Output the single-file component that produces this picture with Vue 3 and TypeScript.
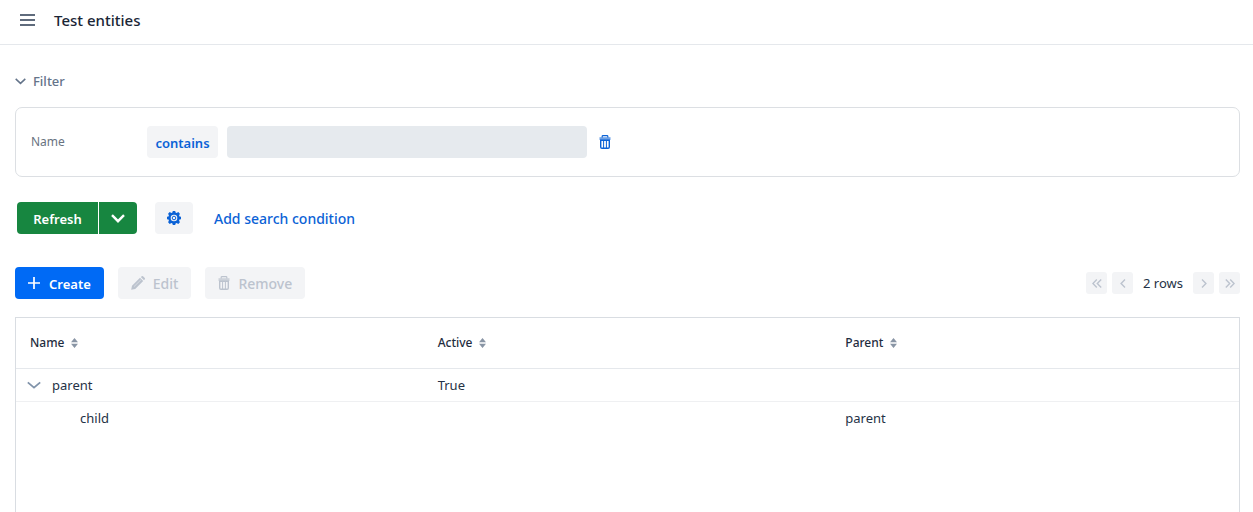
<script setup lang="ts">
import { computed, ref } from 'vue'

interface Entity {
  id: number
  name: string
  active: string
  parent: string
  level: number
  hasChildren: boolean
}

const columns: string[] = ['Name', 'Active', 'Parent']
const entities: Entity[] = [
  { id: 1, name: 'parent', active: 'True', parent: '', level: 0, hasChildren: true },
  { id: 2, name: 'child', active: '', parent: 'parent', level: 1, hasChildren: false },
]

const nameFilter = ref('')
const filterOpen = ref(true)
const expanded = ref(true)
const visibleRows = computed(() => entities.filter((e) => e.level === 0 || expanded.value))
</script>

<template>
  <div class="view">
    <header class="navbar">
      <button class="plain menu" type="button" aria-label="Toggle menu">
        <svg width="15" height="12" viewBox="0 0 15 12"><path d="M0 1h15M0 6h15M0 11h15" stroke="currentColor" stroke-width="1.8" /></svg>
      </button>
      <h1>Test entities</h1>
    </header>

    <main class="content">
      <button class="plain summary" type="button" :aria-expanded="filterOpen" @click="filterOpen = !filterOpen">
        <svg width="11" height="7" viewBox="0 0 11 7"><path d="M.7.9 5.5 5.4 10.3.9" fill="none" stroke="currentColor" stroke-width="1.5" /></svg>
        <span>Filter</span>
      </button>

      <section v-show="filterOpen" class="conditions">
        <label for="name-filter">Name</label>
        <button class="btn soft operation" type="button"><span>contains</span></button>
        <input id="name-filter" v-model="nameFilter" type="text" />
        <button class="plain trash" type="button" aria-label="Remove condition">
          <svg width="12" height="14" viewBox="0 0 12 14"><path d="M3.2 2.4V1.3Q3.2.6 4 .6h4q.8 0 .8.7v1.1" fill="none" stroke="currentColor" stroke-width="1.2" /><path d="M.5 2.2h11v2.8H.5z" fill="currentColor" opacity=".6" /><path d="M1.7 5.3h8.6v6.8q0 1.2-1.2 1.2H2.9q-1.2 0-1.2-1.2z" fill="none" stroke="currentColor" stroke-width="1.4" /><path d="M4.6 5v8M7.4 5v8" stroke="currentColor" stroke-width="1" /></svg>
        </button>
      </section>

      <div class="search">
        <div class="split">
          <button class="btn success" type="button"><span>Refresh</span></button>
          <button class="btn success arrow" type="button" aria-label="More refresh options">
            <svg width="14" height="9" viewBox="0 0 14 9"><path d="m1 1.2 6 6 6-6" fill="none" stroke="currentColor" stroke-width="2.4" /></svg>
          </button>
        </div>
        <button class="btn soft gear" type="button" aria-label="Filter settings">
          <svg width="14" height="14" viewBox="0 0 14 14"><path fill="currentColor" fill-rule="evenodd" d="M5.8 0h2.4l.4 1.5 1 .4 1.7-.8 1.6 1.6-.8 1.7.4 1 1.5.4v2.4l-1.5.4-.4 1 .8 1.7-1.6 1.6-1.7-.8-1 .4L8.2 14H5.8l-.4-1.5-1-.4-1.7.8-1.6-1.6.8-1.7-.4-1L0 8.2V5.8l1.5-.4.4-1-.8-1.7 1.6-1.6 1.7.8 1-.4zM7 3.7a3.3 3.3 0 1 0 0 6.6 3.3 3.3 0 0 0 0-6.6z" /><circle cx="7" cy="7" r="1.8" fill="none" stroke="currentColor" stroke-width="1" /></svg>
        </button>
        <button class="btn link" type="button"><span>Add search condition</span></button>
      </div>

      <div class="toolbar">
        <button class="btn primary" type="button">
          <svg width="12" height="12" viewBox="0 0 12 12"><path d="M6 0v12M0 6h12" stroke="currentColor" stroke-width="1.7" /></svg>
          <span>Create</span>
        </button>
        <button class="btn soft" type="button" disabled>
          <svg width="14" height="14" viewBox="0 0 14 14"><path d="M.2 13.8 1 9.7 9 1.8 12.2 5l-8 8zM9.8 1l1-.8q.6-.4 1.2 0L13.8 2q.4.6 0 1.2l-.8 1z" fill="currentColor" /><path d="M3 10.6l7-6.9" stroke="#f3f4f6" stroke-width=".5" /></svg>
          <span>Edit</span>
        </button>
        <button class="btn soft" type="button" disabled>
          <svg width="12" height="14" viewBox="0 0 12 14"><path d="M3.2 2.4V1.3Q3.2.6 4 .6h4q.8 0 .8.7v1.1" fill="none" stroke="currentColor" stroke-width="1.2" /><path d="M.5 2.2h11v2.8H.5z" fill="currentColor" opacity=".7" /><path d="M1.7 5.3h8.6v6.8q0 1.2-1.2 1.2H2.9q-1.2 0-1.2-1.2z" fill="none" stroke="currentColor" stroke-width="1.4" /><path d="M4.6 5v8M7.4 5v8" stroke="currentColor" stroke-width="1" /></svg>
          <span>Remove</span>
        </button>

        <nav class="pager" aria-label="Pagination">
          <button type="button" disabled aria-label="First page"><svg width="10" height="9" viewBox="0 0 10 9"><path d="M4.8.6.9 4.5l3.9 3.9M9.2.6 5.3 4.5l3.9 3.9" /></svg></button>
          <button type="button" disabled aria-label="Previous page"><svg width="6" height="9" viewBox="0 0 6 9"><path d="M5 .6 1.1 4.5 5 8.4" /></svg></button>
          <span class="count">2 rows</span>
          <button type="button" disabled aria-label="Next page"><svg width="6" height="9" viewBox="0 0 6 9"><path d="m1 .6 3.9 3.9L1 8.4" /></svg></button>
          <button type="button" disabled aria-label="Last page"><svg width="10" height="9" viewBox="0 0 10 9"><path d="m.8.6 3.9 3.9L.8 8.4M5.2.6l3.9 3.9-3.9 3.9" /></svg></button>
        </nav>
      </div>

      <div class="grid">
        <table>
          <thead>
            <tr>
              <th v-for="column in columns" :key="column" scope="col">
                <button class="plain sorter" type="button">
                  <span>{{ column }}</span>
                  <svg width="7" height="10" viewBox="0 0 7 10"><path d="M3.5 0 7 4.2H0zM3.5 10 7 5.8H0z" fill="#8995a5" /></svg>
                </button>
              </th>
            </tr>
          </thead>
          <tbody>
            <tr v-for="row in visibleRows" :key="row.id">
              <td>
                <div class="tree" :class="{ nested: row.level > 0 }">
                  <button v-if="row.hasChildren" class="plain toggle" type="button" aria-label="Toggle children" :aria-expanded="expanded" @click="expanded = !expanded">
                    <svg width="14" height="8" viewBox="0 0 14 8"><path d="m.8 1.4 6.2 5.2 6.2-5.2" fill="none" stroke="currentColor" stroke-width="1.8" /></svg>
                  </button>
                  <span>{{ row.name }}</span>
                </div>
              </td>
              <td>{{ row.active }}</td>
              <td>{{ row.parent }}</td>
            </tr>
          </tbody>
        </table>
      </div>
    </main>
  </div>
</template>

<style>
body {
  margin: 0;
  background: #fff;
}
</style>

<style scoped>
.view {
  display: flex;
  flex-direction: column;
  height: 100vh;
  overflow: hidden;
  color: #253246;
  font: 400 13px/20px "Noto Sans", "Open Sans", sans-serif;
}
button,
input {
  box-sizing: border-box;
  margin: 0;
  padding: 0;
  border: 0;
  font: inherit;
}
svg {
  display: block;
  flex: none;
}
.plain {
  display: flex;
  align-items: center;
  background: none;
}
.navbar {
  display: flex;
  align-items: center;
  gap: 19px;
  box-sizing: border-box;
  height: 45px;
  padding: 0 20px 5px;
  border-bottom: 1px solid #e5e8ec;
}
.menu {
  color: #5f6b7c;
}
h1 {
  margin: 0;
  color: #1a2636;
  font-size: 15px;
  font-weight: 500;
}
.content {
  display: flex;
  flex: 1;
  flex-direction: column;
  min-height: 0;
  padding: 26px 13px 0 15px;
}
.summary {
  align-self: flex-start;
  gap: 7px;
  color: #64748a;
  font-weight: 500;
}
.conditions {
  display: flex;
  align-items: center;
  margin-top: 16px;
  padding: 18px 15px;
  border: 1px solid #dcdfe3;
  border-radius: 7px;
}
.conditions label {
  width: 116px;
  color: #69737f;
  font-size: 12px;
}
.conditions input {
  width: 360px;
  height: 32px;
  margin: 0 12px 0 9px;
  padding: 0 8px;
  border-radius: 4px;
  background: #e6eaee;
}
.trash {
  color: #0b62d6;
}
.btn {
  display: flex;
  align-items: center;
  justify-content: center;
  gap: 8px;
  height: 32px;
  padding: 0 13px;
  border-radius: 4px;
  font-weight: 600;
}
.btn span {
  padding-top: 2px;
}
.soft {
  background: #f3f4f6;
  color: #0b62d6;
}
.soft:disabled {
  color: #bcc3ce;
  font-size: 14px;
  font-weight: 500;
}
.operation {
  min-width: 71px;
  padding: 0 8px;
}
.success {
  background: #178640;
  color: #fff;
}
.primary {
  gap: 9px;
  background: #006af5;
  color: #fff;
}
.search {
  display: flex;
  align-items: center;
  margin: 25px 0 33px 2px;
}
.split {
  display: flex;
  gap: 1px;
}
.split .success:first-child {
  min-width: 81px;
  padding: 0 16px;
  border-radius: 4px 0 0 4px;
}
.split .arrow {
  width: 38px;
  border-radius: 0 4px 4px 0;
}
.gear {
  width: 38px;
  margin: 0 21px 0 18px;
}
.link {
  padding: 0;
  background: none;
  color: #0b62d6;
  font-size: 14px;
  font-weight: 500;
}
.toolbar {
  display: flex;
  align-items: center;
  gap: 14px;
}
.pager {
  display: flex;
  align-items: center;
  gap: 5px;
  margin-left: auto;
}
.pager button {
  display: flex;
  align-items: center;
  justify-content: center;
  width: 21px;
  height: 22px;
  border-radius: 3px;
  background: #f3f4f6;
}
.pager path {
  fill: none;
  stroke: #bcc3ce;
  stroke-width: 1.4;
}
.count {
  margin: 0 5px;
}
.grid {
  flex: 1;
  margin-top: 18px;
  border: 1px solid #d9dde2;
  border-bottom: 0;
}
table {
  width: 100%;
  border-collapse: separate;
  border-spacing: 0;
  table-layout: fixed;
}
th {
  box-sizing: border-box;
  height: 51px;
  padding: 0 14px;
  border-bottom: 1px solid #e5e8ec;
}
.sorter {
  gap: 7px;
  color: #1f2d40;
  font-size: 12px;
  font-weight: 500;
}
td {
  box-sizing: border-box;
  height: 33px;
  padding: 0 14px;
  border-bottom: 1px solid #eff0f2;
}
tbody tr:last-child td {
  border-bottom-color: transparent;
}
.tree {
  display: flex;
  align-items: center;
}
.nested {
  padding-left: 50px;
}
.toggle {
  margin: 0 11px 0 -3px;
  color: #8093aa;
}
</style>
